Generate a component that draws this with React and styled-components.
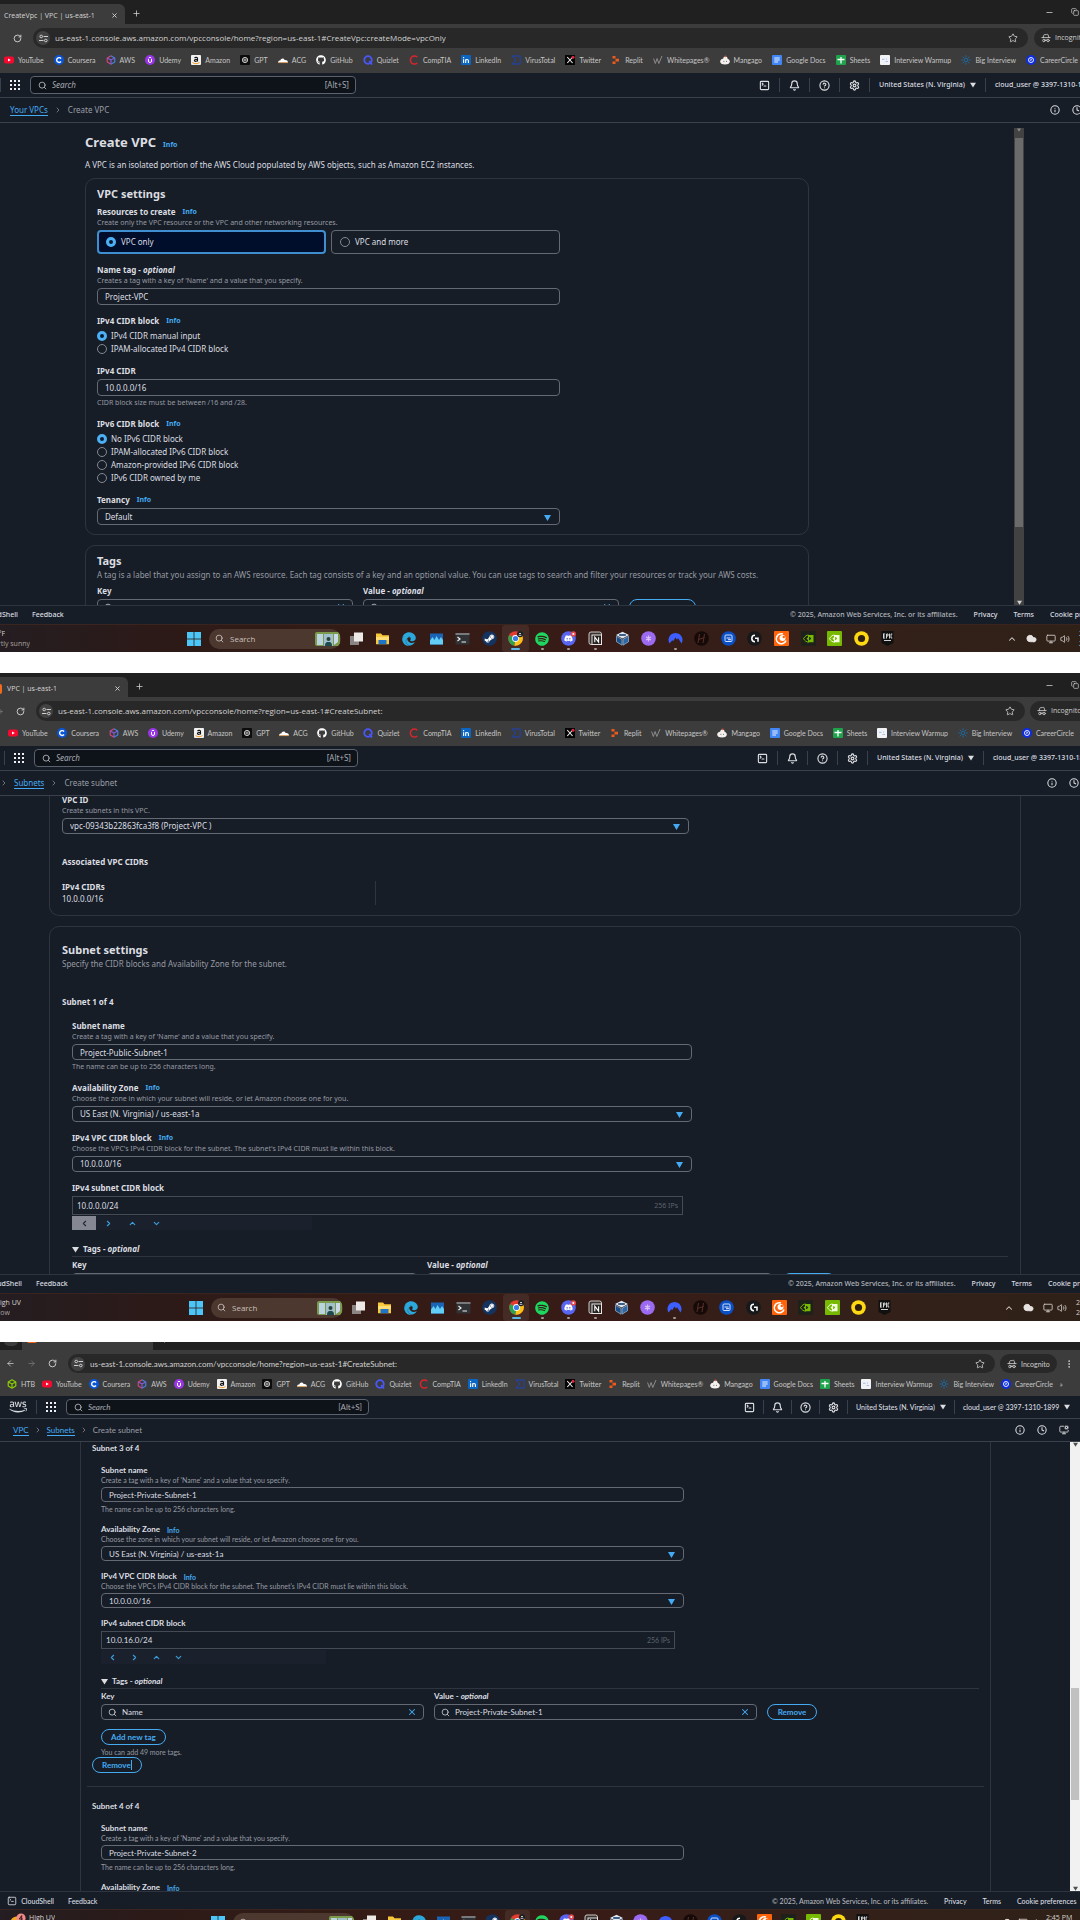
import React, { useId } from 'react';
import styled, { createGlobalStyle, css, ThemeProvider } from 'styled-components';
import {
  FaGithub, FaSpotify, FaDiscord, FaSteamSymbol, FaEdge, FaAws,
} from 'react-icons/fa';
import {
  Search, Bell, CircleQuestionMark, Settings, SquareTerminal, Info, Clock,
  MonitorCog, Monitor, Volume2, ChevronUp, ChevronDown, ChevronLeft, ChevronRight, X, Plus, Star,
  ArrowLeft, ArrowRight, RotateCw, Cloud, Minus, Copy, EllipsisVertical, HatGlasses,
} from 'lucide-react';

const color = {
  bg: '#161d27',
  text: '#dcdde1',
  muted: '#969aa2',
  link: '#45aaf2',
  border: '#646973',
  line: '#2e3540',
  chrome: '#3c3c3c',
  strip: '#202020',
  pill: '#282828',
};

const roomy = {
  font: '"Noto Sans", "Open Sans", sans-serif',
  chromeFont: '"Open Sans", "Noto Sans", sans-serif',
  pill: 20, marks: 25, bar: 25, foot: 19, task: 28,
  label: 12, hint: 10, arrow: 24, stepper: 240,
  crumbGap: 6, toolPad: 9, trayGap: 9, innerLeft: 10, innerTop: 12, tagsTop: 13,
  taskSearch: 132,
};
const first = {
  ...roomy, strip: 24, lead: 33, pillEnd: 6, incognito: 46, marksLeft: 4, marksRight: 2,
  tools: 330, cell: 30, searchEnd: 326, navLead: 20, ctrl: 17,
  iconsWidth: 558, weather: 187, tray: 73, footRight: 290, footLead: 18,
};
const second = {
  ...roomy, strip: 24, lead: 36, pillEnd: 5, incognito: 50, marksLeft: 8, marksRight: 6,
  tools: 332, cell: 30, searchEnd: 324, navLead: 24, ctrl: 16,
  iconsWidth: 553, weather: 189, tray: 76, footRight: 292, footLead: 22,
};
const third = {
  font: 'Lato, "Noto Sans", sans-serif',
  chromeFont: 'Lato, "Open Sans", sans-serif',
  pill: 19, marks: 23, bar: 23, foot: 18, task: 26,
  label: 11, hint: 9, arrow: 22, stepper: 225,
  crumbGap: 5, toolPad: 8, trayGap: 4, innerLeft: 9, innerTop: 11, tagsTop: 11,
  taskSearch: 122,
  strip: 8, lead: 68, pillEnd: 5, incognito: 80, marksLeft: 7, marksRight: 17,
  tools: 344, cell: 28, searchEnd: 303, navLead: 56, ctrl: 15,
  iconsWidth: 518, weather: 211, tray: 91, footRight: 308, footLead: 54,
};

const Global = createGlobalStyle`
  *, *::before, *::after { box-sizing: border-box; }
  html, body { margin: 0; background: #fff; }
  button, input, select { font: inherit; color: inherit; margin: 0; padding: 0; border: 0; background: none; min-width: 0; }
  button { cursor: pointer; }
  h1, h2, h3, p { margin: 0; }
  svg { display: block; flex: none; }
`;

const Page = styled.main`
  height: 100vh;
  overflow: hidden;
  display: flex;
  flex-direction: column;
  gap: 21px;
`;
const Shot = styled.section`
  flex: none;
  overflow: hidden;
  background: ${color.bg};
  color: ${color.text};
  font-family: ${(p) => p.theme.font};
  font-size: 8px;
  line-height: 12px;
`;

/* ---------- browser chrome ---------- */
const TabStrip = styled.div`
  height: ${(p) => p.theme.strip}px;
  overflow: hidden;
  display: flex;
  align-items: flex-end;
  background: ${color.strip};
  color: #d6d6d6;
  font-family: ${(p) => p.theme.chromeFont};
  font-size: 7px;
`;
const Tab = styled.div`
  width: ${(p) => p.$width}px;
  height: 20px;
  padding: ${(p) => p.$pad};
  display: flex;
  align-items: center;
  gap: 5px;
  background: ${color.chrome};
  border-radius: 0 6px 0 0;
  white-space: nowrap;
`;
const TabTitle = styled.span`flex: 1;`;
const TabIcon = styled.span`
  flex: none;
  width: ${(p) => p.$width}px;
  overflow: hidden;
  display: flex;
  justify-content: flex-end;
`;
const TabSearch = styled.span`
  width: 14px; height: 16px; margin: 0 4px 4px; border-radius: 5px; background: ${color.chrome};
`;
const IconButton = styled.button`
  flex: none;
  display: grid;
  place-items: center;
`;
const NewTab = styled(IconButton)`width: 22px; height: 22px;`;
const WindowButtons = styled.div`
  flex: none;
  width: 35px;
  height: 24px;
  margin-left: auto;
  display: flex;
  align-items: center;
  gap: 17px;
`;
const Toolbar = styled.div`
  display: flex;
  padding-top: 4px;
  background: ${color.chrome};
  color: #cfcfcf;
  font-family: ${(p) => p.theme.chromeFont};
`;
const Lead = styled.div`
  flex: none;
  width: ${(p) => p.theme.lead}px;
  padding-right: 11px;
  overflow: hidden;
  display: flex;
  align-items: center;
  justify-content: flex-end;
  gap: 12px;
`;
const Address = styled.div`
  flex: 1;
  height: ${(p) => p.theme.pill}px;
  border-radius: 10px;
  background: ${color.pill};
  display: flex;
  align-items: center;
  gap: 5px;
  padding: 0 10px 0 3px;
`;
const SiteInfo = styled.span`
  width: 14px; height: 14px; border-radius: 7px; background: #424242;
  display: grid; place-items: center;
`;
const AddressInput = styled.input`flex: 1; color: #d2d2d2; outline: none;`;
const Incognito = styled.div`
  flex: none;
  width: ${(p) => p.theme.incognito}px;
  margin-left: ${(p) => p.theme.pillEnd}px;
  display: flex;
  align-items: center;
  gap: 7px;
  overflow: hidden;
  font-size: 7px;
`;
const IncognitoPill = styled.span`
  flex: none;
  height: ${(p) => p.theme.pill}px;
  padding: 0 7px;
  border-radius: 10px;
  background: ${color.pill};
  display: flex;
  align-items: center;
  gap: 4px;
`;
const Bookmarks = styled.nav`
  height: ${(p) => p.theme.marks}px;
  padding: 0 ${(p) => p.theme.marksRight}px 1px ${(p) => p.theme.marksLeft}px;
  display: flex;
  align-items: center;
  justify-content: space-between;
  background: ${color.chrome};
  font: 7px/10px Lato, "Open Sans", sans-serif;
  white-space: nowrap;
`;
const Bookmark = styled.a`
  display: flex;
  align-items: center;
  gap: 4px;
  color: #c6c6c6;
  text-decoration: none;
`;

/* ---------- console header ---------- */
const Bar = styled.div`
  height: ${(p) => p.theme.bar}px;
  display: flex;
  align-items: center;
  border-bottom: 1px solid #3a414c;
  white-space: nowrap;
`;
const NavLead = styled.div`
  flex: none;
  width: ${(p) => p.theme.navLead}px;
  margin-right: 10px;
  overflow: hidden;
  display: flex;
  align-items: center;
  justify-content: flex-end;
  gap: 9px;
`;
const Rule = styled.span`
  width: 1px;
  height: 14px;
  background: #3a414c;
`;
const GlobalSearch = styled.label`
  flex: none;
  width: ${(p) => p.theme.searchEnd}px;
  height: ${(p) => p.theme.bar - 7}px;
  padding: 0 6px 0 7px;
  display: flex;
  align-items: center;
  gap: 5px;
  border: 1px solid #5c626d;
  border-radius: 4px;
  background: #0e131a;
  color: #a9abb2;
`;
const BareInput = styled.input`
  flex: 1;
  outline: none;
  &::placeholder { color: #a9abb2; font-style: italic; opacity: 1; }
`;
const Tools = styled.div`
  flex: none;
  width: ${(p) => p.theme.tools}px;
  margin-left: auto;
  overflow: hidden;
  display: flex;
  align-items: center;
  font-size: 7px;
  font-weight: 500;
`;
const ToolCell = styled.button`
  flex: none;
  height: 14px;
  min-width: ${(p) => p.theme.cell}px;
  padding: 0 ${(p) => (p.$text ? p.theme.toolPad : 0)}px;
  display: flex;
  align-items: center;
  justify-content: center;
  gap: 5px;
  border-right: ${(p) => (p.$last ? '0' : '1px solid #3a414c')};
`;
const Crumbs = styled.nav`
  flex: 1;
  display: flex;
  align-items: center;
  gap: ${(p) => p.theme.crumbGap}px;
  overflow: hidden;
  color: #9a9da5;
  line-height: 10px;
  padding-left: ${(p) => p.$left}px;
`;
const Crumb = styled.a`
  color: ${color.link};
  text-decoration: none;
  border-bottom: 1px solid ${color.link};
`;
const CrumbTools = styled.div`
  flex: none;
  width: ${(p) => p.$width}px;
  display: flex;
  gap: 12px;
`;

/* ---------- console body ---------- */
const Viewport = styled.div`
  height: ${(p) => p.$height}px;
  overflow: hidden;
  display: flex;
`;
const Content = styled.div`
  flex: 1;
  min-width: 0;
  padding: ${(p) => p.$pad};
`;
const Scrolled = styled.div`margin-top: ${(p) => p.$by}px;`;
const Heading = styled.h1`
  height: 18px;
  font-size: 13px;
  line-height: 18px;
  display: flex;
  align-items: baseline;
  gap: 7px;
`;
const Lede = styled.p`margin: 8px 0 7px;`;
const Card = styled.section`
  max-width: ${(p) => p.$max || 'none'};
  padding: ${(p) => p.$pad};
  border: 1px solid ${color.line};
  border-radius: 10px;
  ${(p) => p.$cut && css`border-top: 0; border-radius: 0 0 10px 10px;`}
  ${(p) => p.$open && css`border-top: 0; border-radius: 0;`}
  & + & { margin-top: 10px; }
`;
const CardTitle = styled.h2`font-size: 11px; line-height: 16px;`;
const Sub = styled.p`color: ${color.muted};`;
const Stack = styled.div`
  display: flex;
  flex-direction: column;
  gap: 10px;
  max-width: ${(p) => p.$max};
  margin-top: ${(p) => p.$top || 0}px;
`;
const Group = styled.div`min-width: 0;`;
const LabelRow = styled.div`
  height: ${(p) => p.theme.label}px;
  line-height: ${(p) => p.theme.label}px;
  display: flex;
  align-items: center;
  gap: 7px;
  font-weight: 700;
  white-space: nowrap;
`;
const InfoLink = styled.a`
  color: ${color.link};
  font-size: 7px;
  line-height: 10px;
  font-weight: 700;
  text-decoration: none;
`;
const Hint = styled.p`
  height: ${(p) => p.theme.hint}px;
  line-height: ${(p) => p.theme.hint}px;
  font-size: 7px;
  color: ${color.muted};
  white-space: nowrap;
`;
const Help = styled(Hint)`height: 10px; line-height: 10px; margin-top: 2px;`;
const box = css`
  width: 100%;
  height: ${(p) => p.theme.ctrl}px;
  margin-top: 2px;
  border: 1px solid ${color.border};
  border-radius: 4px;
`;
const TextBox = styled.input`${box} display: block; padding: 0 7px;`;
const SelectWrap = styled.div`position: relative;`;
const SelectBox = styled.select`${box} display: block; padding: 0 7px; appearance: none; background: ${color.bg};`;
const Caret = styled.svg`
  position: absolute;
  right: 9px;
  top: 50%;
  margin-top: -2px;
  pointer-events: none;
`;
const Tiles = styled.div`
  margin-top: 2px;
  display: grid;
  grid-template-columns: 1fr 1fr;
  gap: 5px;
`;
const Tile = styled.label`
  height: 24px;
  padding: 0 8px;
  display: flex;
  align-items: center;
  gap: 5px;
  border: ${(p) => (p.$on ? '2px solid #3f8fd0' : `1px solid ${color.border}`)};
  padding-left: ${(p) => (p.$on ? 7 : 8)}px;
  border-radius: 4px;
  background: ${(p) => (p.$on ? '#000d2b' : 'transparent')};
`;
const Radios = styled.div`margin-top: 2px;`;
const RadioRow = styled.label`
  height: 13px;
  display: flex;
  align-items: center;
  gap: 4px;
`;
const Radio = styled.input`
  appearance: none;
  flex: none;
  width: 10px;
  height: 10px;
  border: 1px solid #858992;
  border-radius: 50%;
  &:checked { border: 3px solid #4cb0f5; background: #0b1a33; }
`;
const Facts = styled.div`
  display: grid;
  grid-template-columns: 314px 1fr;
  margin: 13px 0 10px;
`;
const Fact = styled.div`
  border-right: 1px solid ${color.line};
  line-height: 12px;
`;
const Strong = styled.h3`
  font-size: 8px;
  line-height: ${(p) => p.theme.label}px;
  margin-top: ${(p) => p.$top || 0}px;
`;
const Inner = styled.div`
  padding: ${(p) => p.theme.innerTop}px 0 0 ${(p) => p.theme.innerLeft}px;
`;
const CidrBox = styled.label`
  height: ${(p) => p.theme.ctrl + 3}px;
  margin: 2px 9px 0 0;
  padding: 0 4px;
  display: flex;
  align-items: center;
  border: 1px solid #454b55;
`;
const Count = styled.span`font-size: 7px; color: #5d626b;`;
const Stepper = styled.div`
  width: ${(p) => p.theme.stepper}px;
  height: 14px;
  margin-top: 1px;
  display: flex;
  background: #1a212c;
  color: #3aa0dc;
`;
const Step = styled(IconButton)`
  width: ${(p) => p.theme.arrow}px;
  height: 14px;
  &:disabled { background: #858892; color: #23282f; }
`;
const TagsHead = styled.h3`
  margin: ${(p) => p.theme.tagsTop}px 0 2px;
  padding-bottom: 1px;
  display: flex;
  align-items: center;
  gap: 4px;
  border-bottom: 1px solid ${color.line};
  font-size: 8px;
  line-height: 12px;
`;
const TagRow = styled.div`
  display: grid;
  grid-template-columns: ${(p) => p.$cols};
  gap: ${(p) => p.$gap || 10}px;
  align-items: end;
`;
const TagBox = styled.div`
  ${box}
  height: 16px;
  padding: 0 6px;
  display: flex;
  align-items: center;
  gap: 5px;
  color: ${color.text};
`;
const Pill = styled.button`
  height: 16px;
  padding: 0 9px;
  display: inline-flex;
  align-items: center;
  justify-content: center;
  border: 1px solid ${color.link};
  border-radius: 8px;
  color: ${color.link};
  font-weight: 700;
  line-height: 12px;
`;
const TextCursor = styled.span`width: 1px; height: 10px; background: ${color.link};`;
const Divider = styled.hr`
  height: 1px;
  border: 0;
  margin: 13px -5px 14px;
  background: ${color.line};
`;
const Scrollbar = styled.div`
  flex: none;
  width: 10px;
  margin: ${(p) => p.$top || 0}px ${(p) => p.$right || 0}px 0 0;
  display: flex;
  flex-direction: column;
  align-items: center;
  justify-content: space-between;
  background: ${(p) => p.$track};
`;
const Thumb = styled.div`
  width: 8px;
  height: ${(p) => p.$height}px;
  margin-bottom: auto;
  margin-top: ${(p) => p.$offset || 0}px;
  background: ${(p) => p.$color};
`;

/* ---------- footer and taskbar ---------- */
const Footer = styled.footer`
  height: ${(p) => p.theme.foot}px;
  border-top: 1px solid ${color.line};
  display: flex;
  align-items: center;
  gap: 14px;
  font-size: 7px;
  font-weight: 500;
  white-space: nowrap;
`;
const FootLead = styled.div`
  flex: none;
  width: ${(p) => p.theme.footLead}px;
  overflow: hidden;
  display: flex;
  align-items: center;
  justify-content: flex-end;
  gap: 4px;
`;
const FootLink = styled.a`color: ${color.text}; text-decoration: none; flex: none;`;
const FootRight = styled.div`
  flex: none;
  width: ${(p) => p.theme.footRight}px;
  margin-left: auto;
  overflow: hidden;
  display: flex;
  gap: 16px;
`;
const Legal = styled.span`flex: none; color: #b4b6bc;`;
const Taskbar = styled.div`
  height: ${(p) => p.theme.task}px;
  display: flex;
  align-items: center;
  background: linear-gradient(90deg, #241d21 0%, #2c1a18 14%, #331b15 30%, #381b16 55%, #34201a 75%, #2f2117 100%);
  border-top: 1px solid #3a2420;
  font: 7px/10px "Open Sans", sans-serif;
  color: #d8d2d0;
`;
const Weather = styled.div`
  flex: none;
  width: ${(p) => p.theme.weather}px;
  display: flex;
  gap: 3px;
  padding-left: ${(p) => p.$left || 0}px;
`;
const WeatherText = styled.div`
  overflow: hidden;
  white-space: nowrap;
`;
const WeatherLine = styled.div`
  width: ${(p) => (p.$width ? `${p.$width}px` : 'auto')};
  overflow: hidden;
  display: flex;
  justify-content: ${(p) => (p.$width ? 'flex-end' : 'flex-start')};
  color: ${(p) => (p.$dim ? '#a8a09e' : 'inherit')};
`;
const TaskSearch = styled.label`
  flex: none;
  width: ${(p) => p.theme.taskSearch}px;
  height: 20px;
  margin: 0 2px 0 8px;
  padding: 0 1px 0 6px;
  display: flex;
  align-items: center;
  gap: 6px;
  border-radius: 10px;
  background: #4d382f;
  font-size: 8px;
  overflow: hidden;
`;
const TaskInput = styled.input`
  flex: 1; outline: none;
  &::placeholder { color: #c9c0bc; opacity: 1; }
`;
const Apps = styled.div`
  flex: none;
  width: ${(p) => p.theme.iconsWidth}px;
  height: 100%;
  display: flex;
`;
const AppButton = styled.button`
  flex: 1;
  display: flex;
  flex-direction: column;
  align-items: center;
  justify-content: flex-end;
  gap: 2px;
  border-radius: 3px;
  background: ${(p) => (p.$state === 'active' ? 'rgba(255,255,255,0.07)' : 'none')};
  &::after {
    content: '';
    width: ${(p) => (p.$state === 'active' ? 9 : 3)}px;
    height: 2px;
    margin-bottom: 2px;
    border-radius: 1px;
    background: ${(p) => ({ active: '#5db4e6', open: '#a39a97' }[p.$state] || 'transparent')};
  }
`;
const Tray = styled.div`
  flex: none;
  width: ${(p) => p.theme.tray}px;
  margin-left: auto;
  overflow: hidden;
  display: flex;
  align-items: center;
  gap: ${(p) => p.theme.trayGap}px;
  white-space: nowrap;
`;
const TrayPair = styled.div`display: flex; gap: 4px; align-items: center;`;

/* ---------- drawings ---------- */
const Down = ({ size = 6, fill = 'currentColor' }) => (
  <svg width={size} height={size} viewBox="0 0 6 6"><path d="M0 .8h6L3 5.6z" fill={fill} /></svg>
);
const Grid9 = () => (
  <svg width="10" height="10" viewBox="0 0 10 10" fill="#f0f0f2">
    {[0, 4, 8].map((y) => [0, 4, 8].map((x) => <rect key={`${x}-${y}`} x={x} y={y} width="2" height="2" />))}
  </svg>
);
const Sliders = () => (
  <svg width="9" height="9" viewBox="0 0 9 9" fill="none" stroke="#cfcfcf">
    <path d="M4.5 2.5H9M0 6.5h4.5" /><circle cx="2.2" cy="2.5" r="1.3" /><circle cx="6.8" cy="6.5" r="1.3" />
  </svg>
);
const Sq = ({ bg, children, r = 1 }) => (
  <svg width="10" height="10" viewBox="0 0 10 10"><rect width="10" height="10" rx={r} fill={bg} />{children}</svg>
);
const Raw = ({ children }) => <svg width="10" height="10" viewBox="0 0 10 10" fill="none">{children}</svg>;
const Cube = ({ a, b, c }) => (
  <Raw>
    <path d="M5 .8 8.8 3v4L5 9.2" stroke={a} strokeWidth="1.1" />
    <path d="M5 9.2 1.2 7V3L5 .8" stroke={b} strokeWidth="1.1" />
    <path d="M1.2 3 5 5l3.8-2M5 5v4" stroke={c} strokeWidth="1.1" />
  </Raw>
);
const bookmarks = [
  ['YouTube', <Raw><rect y="1.5" width="10" height="7" rx="2" fill="#f5092f" /><path d="M4 3.4 6.8 5 4 6.6z" fill="#fff" /></Raw>],
  ['Coursera', <Sq bg="#0a55d6" r={5}><path d="M7 3.6A2.4 2.4 0 1 0 7 6.5" stroke="#fff" strokeWidth="1.4" fill="none" /></Sq>],
  ['AWS', <Cube a="#3f86e8" b="#d8467a" c="#8a5be0" />],
  ['Udemy', <Sq bg="#9a35e6" r={5}><path d="M3.5 4v2a1.5 1.5 0 0 0 3 0V4M3.7 3 5 2.2 6.3 3" stroke="#fff" strokeWidth="1" fill="none" /></Sq>],
  ['Amazon', <Sq bg="#f1f1f1"><path d="M3.5 3c1-1 3-.8 3 .6v3M6.4 4.2c-1.600 0-3 .2-3 1.300s2.200 1.200 3 0" stroke="#111" strokeWidth="1.1" fill="none" /><path d="M1.500 7.600c2.300 1.500 4.700 1.500 7 0" stroke="#f59a1c" strokeWidth="1" fill="none" /></Sq>],
  ['GPT', <Sq bg="#0c0c0c"><circle cx="5" cy="5" r="2.600" stroke="#c9c9c9" fill="none" /><path d="M5 2.400v5.200M2.700 3.700l4.600 2.600M7.300 3.700 2.700 6.300" stroke="#c9c9c9" strokeWidth=".6" /></Sq>],
  ['ACG', <Raw><path d="M0 7.500c0-1.700 1.700-2 2.300-2C2.700 3 6 2.600 6.700 5c1.600-.2 3.300.6 3.300 2.500z" fill="#fff" /><path d="M0 7.600h10" stroke="#f0a050" strokeWidth=".7" /></Raw>],
  ['GitHub', <FaGithub size={10} color="#fff" />],
  ['Quizlet', <Raw><circle cx="5" cy="5" r="3.800" stroke="#4a57f5" strokeWidth="1.800" /><path d="m6.200 6.200 2.800 3.300" stroke="#4a57f5" strokeWidth="1.800" /></Raw>],
  ['CompTIA', <Raw><path d="M8.200 2.300A4 4 0 1 0 8.200 7.900" stroke="#d8262e" strokeWidth="1.500" /></Raw>],
  ['LinkedIn', <Sq bg="#0a66c2"><path d="M2.600 4.200V8M4.700 8V4.200M4.700 5.800c0-1.800 2.700-1.800 2.700 0V8M2.600 2v1.200" stroke="#fff" strokeWidth="1.100" fill="none" /></Sq>],
  ['VirusTotal', <Raw><path d="M.8 1h8.400v8H.8L5 5z" stroke="#1c43b8" strokeWidth="1" /></Raw>],
  ['Twitter', <Sq bg="#050505" r={0}><path d="m2.200 2 5.400 6M7.700 2 2.300 8" stroke="#eee" strokeWidth="1.100" /><circle cx="8" cy="2.200" r="1.500" fill="#e0273d" /></Sq>],
  ['Replit', <Raw><path d="M1.500 1h3v2.600h-3zM4.500 3.700H8v2.700H4.500zM1.500 6.400h3V9h-3z" fill="#ee5a1a" /></Raw>],
  ['Whitepages®', <Raw><path d="m.6 3.500 1.700 5 1.800-5 1.700 5L9 1" stroke="#8b8b8b" strokeWidth="1" /></Raw>],
  ['Mangago', <Raw><ellipse cx="5" cy="6.500" rx="4.800" ry="3" fill="#f4f0ee" /><circle cx="5.400" cy="3.800" r="2.200" fill="#f4f0ee" /><circle cx="5.500" cy="1.300" r=".9" fill="#d8563c" /><path d="M3.500 6.400h.8M6.200 6.400H7" stroke="#333" strokeWidth=".8" /></Raw>],
  ['Google Docs', <Sq bg="#4285f4"><path d="M2.300 3h5.400M2.300 5h5.400M2.300 7h3.700" stroke="#fff" strokeWidth=".9" /></Sq>],
  ['Sheets', <Sq bg="#1fa24c"><path d="M5 2v6.500M1.500 4.500h7" stroke="#fff" strokeWidth="1.300" /></Sq>],
  ['Interview Warmup', <Sq bg="#f0f2f6"><path d="M2 4.300h2.500M5.500 6.500H8M6 4h1" stroke="#9db7ea" strokeWidth=".9" /></Sq>],
  ['Big Interview', <Raw><g stroke="#1672b8" strokeWidth=".8"><circle cx="5" cy="5" r="1.800" /><path d="M5 .3v2M5 7.700v2M.3 5h2M7.700 5h2M1.700 1.700l1.400 1.400M6.900 6.900l1.400 1.400M8.300 1.700 6.900 3.100M3.100 6.900 1.700 8.300" /></g></Raw>],
  ['CareerCircle', <Sq bg="#0d2ee0" r={5}><circle cx="5" cy="5" r="2.500" stroke="#fff" fill="none" strokeWidth=".9" /><path d="M4.300 4.200h1.200L4.600 6" stroke="#fff" strokeWidth=".8" fill="none" /></Sq>],
];

const Disc = ({ bg, children }) => (
  <svg width="15" height="15" viewBox="0 0 15 15"><circle cx="7.500" cy="7.500" r="7.300" fill={bg} />{children}</svg>
);
const Block = ({ bg = 'none', children, r = 1 }) => (
  <svg width="15" height="15" viewBox="0 0 15 15"><rect width="15" height="15" rx={r} fill={bg} />{children}</svg>
);
const Badge = () => <><circle cx="12.300" cy="3" r="2.700" fill="#e5484d" /><circle cx="12.300" cy="3" r="1" fill="#fff" /></>;
const Eye = ({ c }) => (
  <>
    <path d="M2.500 7.600C4 5 6 4 7.500 4v7.200C5.500 11 3.600 9.700 2.500 7.600z" fill="none" stroke={c} strokeWidth="1" />
    <path d="M7 4h5.500v7.200H7V9.500c1.500 0 2.500-.8 3.200-1.900C9.500 6.500 8.500 5.800 7 5.800z" fill={c} />
    <circle cx="7" cy="7.600" r="1.200" fill={c} />
  </>
);
const apps = [
  ['Task view', '', <Block><rect x="1" y="5" width="9" height="9" fill="#8a8583" /><rect x="5" y="1.500" width="9" height="9" fill="#ece9e7" /></Block>],
  ['File Explorer', '', <Block><path d="M1 2.500h5l1.500 1.700H14v9H1z" fill="#f8c93b" /><path d="M3.500 9h8v4.200h-8z" fill="#1f74c9" /><path d="M1 6h13v3H1z" fill="#ffdf75" /></Block>],
  ['Edge', '', <FaEdge size={14} color="#2ba9dc" />],
  ['Task Manager', '', <Block><rect x="1" y="2.500" width="13" height="11" fill="#1b63b5" /><path d="M1 9.500 3.500 6l2 3 2-4 2.500 4L12 6l2 3v4.500H1z" fill="#62cdf5" /></Block>],
  ['Terminal', '', <Block><rect x=".5" y="2" width="14" height="11.500" rx="1" fill="#303236" /><rect x=".5" y="2" width="14" height="2" fill="#77797d" /><path d="m2.500 6 2.500 2-2.500 2M6.500 11h4.500" stroke="#eee" strokeWidth="1.200" fill="none" /></Block>],
  ['Steam', '', <Disc bg="#14335f"><g transform="translate(2 2)"><FaSteamSymbol size={11} color="#fff" /></g></Disc>],
  ['Chrome', 'active', <Disc bg="#e33b2e"><path d="M7.500 7.500 1.200 4a7.300 7.300 0 0 0 5.300 10.700z" fill="#2fa24f" /><path d="M7.500 7.500 6.500 14.700A7.300 7.300 0 0 0 14.200 4.500H7.500z" fill="#fbc116" /><circle cx="7.500" cy="7.500" r="3.400" fill="#fff" /><circle cx="7.500" cy="7.500" r="2.600" fill="#3b7de8" /><circle cx="12" cy="3.200" r="3" fill="#1a1f24" /><path d="M11 2.500h2M10.600 4.300h2.800" stroke="#d8dde2" strokeWidth=".9" /></Disc>],
  ['Spotify', 'open', <FaSpotify size={14} color="#1ed760" />],
  ['Discord', 'open', <Disc bg="#5865f2"><g transform="translate(3 3)"><FaDiscord size={9} color="#fff" /></g><Badge /></Disc>],
  ['Notion', 'open', <Block><rect x="1" y="1" width="12.500" height="12.500" rx="2" fill="#3a3431" stroke="#cfcac7" /><rect x="4" y="4" width="9.500" height="9.500" fill="#262220" stroke="#e8e4e1" /><path d="M6.800 11.200v-5l3.800 5v-5" stroke="#fff" strokeWidth="1.100" fill="none" /></Block>],
  ['VirtualBox', '', <Block><path d="M7.500 .8 14 4 7.500 7.600 1 4z" fill="#dde8f2" /><path d="M1.500 5.200 7 8.300v5.900l-5.500-3.400z" fill="#1d4e86" stroke="#9dbbd8" strokeWidth=".7" /><path d="M13.500 5.200 8 8.300v5.900l5.500-3.400z" fill="#2c67a6" stroke="#9dbbd8" strokeWidth=".7" /><path d="M4.200 4h6.600" stroke="#173a66" strokeWidth="1.600" /></Block>],
  ['Obs', '', <Disc bg="#9b6af0"><path d="M7.500 4.500v6M5 6l5 3M10 6 5 9" stroke="#d9c2ff" strokeWidth="1.200" /></Disc>],
  ['NordVPN', 'open', <Block><path d="M1.500 12.500A7 7 0 1 1 13.500 12.500L10 7 9 8.700 7.500 6.500 5 10.500 4.500 9z" fill="#3e5fff" /></Block>],
  ['Hitman', '', <Disc bg="#150a08"><path d="M5.500 3 4 12M10.500 3 9 12M4.500 8.500l6-2" stroke="#5a2f28" strokeWidth="1" /></Disc>],
  ['Remote', '', <Disc bg="#0b4fc4"><rect x="4" y="4" width="7" height="6.500" rx="1" stroke="#cfe2ff" fill="none" /><path d="M5.500 7h4M7 8.700h3" stroke="#fff" strokeWidth=".9" /></Disc>],
  ['G HUB', '', <Disc bg="#16181a"><path d="M8 4.300a3.200 3.200 0 1 0 0 6.400M8 7.200h3v3.500" stroke="#fff" strokeWidth="1.500" fill="none" /></Disc>],
  ['Crunchyroll', '', <Block bg="#ff640a"><path d="M12 9.500A5 5 0 1 1 9 3" stroke="#fff" strokeWidth="1.600" fill="none" /><circle cx="8.500" cy="7" r="3" fill="#fff" /><circle cx="9.800" cy="6" r="1.200" fill="#ff640a" /></Block>],
  ['NVIDIA app', '', <Block bg="#1d2119"><Eye c="#76b900" /></Block>],
  ['GeForce', '', <Block bg="#76b900"><Eye c="#f3ffe0" /></Block>],
  ['Rockstar', '', <Disc bg="#ffd814"><circle cx="7.500" cy="7.500" r="3.600" fill="#2c1d10" /></Disc>],
  ['Epic Games', '', <Block><path d="M1.500 0h12v12L7.500 15 1.500 12z" fill="#101010" /><path d="M3.500 2.500v5M3.500 3h1.700M3.500 5h1.500M3.500 7h1.700M6.500 7.500V3h1.500v2H6.500M9.500 2.500v5M12.300 3H11v4h1.300M4 9.500h7" stroke="#e6e6e6" strokeWidth=".9" fill="none" /></Block>],
];
const WinLogo = () => (
  <svg width="14" height="14" viewBox="0 0 14 14" fill="#4cc6f7">
    <rect width="6.600" height="6.600" /><rect x="7.400" width="6.600" height="6.600" /><rect y="7.400" width="6.600" height="6.600" /><rect x="7.400" y="7.400" width="6.600" height="6.600" />
  </svg>
);
const Gallery = () => (
  <svg width="25" height="14" viewBox="0 0 25 14">
    <rect width="25" height="14" rx="2" fill="#7c9a4b" /><rect x="2" y="2" width="6" height="11" fill="#b9d3e0" /><rect x="9" y="2" width="9" height="12" fill="#9fc0cc" />
    <path d="M10 14c0-4 2-4 3.500-4s3.500 0 3.500 4z" fill="#1f4a4a" /><circle cx="13.500" cy="7" r="2" fill="#2a4038" /><path d="M19 2h4v8l-4 3z" fill="#c9d9e8" />
  </svg>
);
const SunBadge = () => (
  <svg width="16" height="16" viewBox="0 0 16 16"><circle cx="6.500" cy="9.500" r="6" fill="#f5a623" /><circle cx="11" cy="5" r="4.600" fill="#f28b8b" /><path d="M11.700 7.500v-5L9.300 6h3.400" stroke="#3a1a1a" fill="none" /></svg>
);

/* ---------- shared parts ---------- */
function Chrome({ tab, tabWidth, tabPad, tabIcon, url, full }) {
  return (
    <>
      <TabStrip>
        {full && <TabSearch />}
        <Tab $width={tabWidth} $pad={tabPad}>
          {tabIcon && <TabIcon $width={tabIcon}><Sq bg="#f26b1d" r={2} /></TabIcon>}
          <TabTitle>{tab}</TabTitle>
          <IconButton aria-label="Close tab"><X size={7} strokeWidth={3} /></IconButton>
        </Tab>
        <NewTab aria-label="New tab"><Plus size={9} /></NewTab>
        <WindowButtons>
          <IconButton aria-label="Minimize"><Minus size={9} /></IconButton>
          <IconButton aria-label="Restore"><Copy size={8} /></IconButton>
        </WindowButtons>
      </TabStrip>
      <Toolbar>
        <Lead>
          <IconButton aria-label="Back"><ArrowLeft size={9} /></IconButton>
          <IconButton aria-label="Forward"><ArrowRight size={9} color="#7a7a7a" /></IconButton>
          <IconButton aria-label="Reload"><RotateCw size={9} strokeWidth={2.500} /></IconButton>
        </Lead>
        <Address>
          <SiteInfo><Sliders /></SiteInfo>
          <AddressInput aria-label="Address" defaultValue={url} />
          <Star size={10} />
        </Address>
        <Incognito>
          <IncognitoPill><HatGlasses size={10} /> Incognito</IncognitoPill>
          {full && <EllipsisVertical size={10} />}
        </Incognito>
      </Toolbar>
      <Bookmarks aria-label="Bookmarks">
        {full && <Bookmark href="#htb"><Cube a="#8fd400" b="#8fd400" c="#8fd400" />HTB</Bookmark>}
        {bookmarks.map(([name, icon]) => <Bookmark key={name} href={`#${name}`}>{icon}{name}</Bookmark>)}
        {full && <Bookmark href="#more">»</Bookmark>}
      </Bookmarks>
    </>
  );
}

function Header({ full, left, trail, toolsWidth }) {
  return (
    <>
      <Bar>
        <NavLead>
          {full && <FaAws size={18} />}
          <Rule />
          <Grid9 />
        </NavLead>
        <GlobalSearch>
          <Search size={9} strokeWidth={2.500} />
          <BareInput placeholder="Search" aria-label="Search services" />
          [Alt+S]
        </GlobalSearch>
        <Tools>
          <ToolCell aria-label="CloudShell"><SquareTerminal size={11} strokeWidth={2.500} /></ToolCell>
          <ToolCell aria-label="Notifications"><Bell size={11} strokeWidth={2.500} /></ToolCell>
          <ToolCell aria-label="Support"><CircleQuestionMark size={11} strokeWidth={2.500} /></ToolCell>
          <ToolCell aria-label="Settings"><Settings size={11} strokeWidth={2.500} /></ToolCell>
          <ToolCell $text>United States (N. Virginia) <Down /></ToolCell>
          <ToolCell $text $last>cloud_user @ 3397-1310-1899 <Down /></ToolCell>
        </Tools>
      </Bar>
      <Bar>
        <Crumbs aria-label="Breadcrumb" $left={left}>
          {trail.map((t, i) => (
            <React.Fragment key={i}>
              {i > 0 && <ChevronRight size={8} />}
              {i < trail.length - 1 ? t && <Crumb href={`#${t}`}>{t}</Crumb> : <span>{t}</span>}
            </React.Fragment>
          ))}
        </Crumbs>
        <CrumbTools $width={toolsWidth}>
          <Info size={10} strokeWidth={2.500} />
          <Clock size={10} strokeWidth={2.500} />
          {full && <MonitorCog size={10} />}
        </CrumbTools>
      </Bar>
    </>
  );
}

function Label({ htmlFor, info, optional, children }) {
  return (
    <LabelRow>
      <label htmlFor={htmlFor}>{children}{optional && <> - <em>optional</em></>}</label>
      {info && <InfoLink href="#info">Info</InfoLink>}
    </LabelRow>
  );
}
function TextField({ label, optional, hint, help, value }) {
  const id = useId();
  return (
    <Group>
      <Label htmlFor={id} optional={optional}>{label}</Label>
      {hint && <Hint>{hint}</Hint>}
      <TextBox id={id} defaultValue={value} />
      {help && <Help>{help}</Help>}
    </Group>
  );
}
function SelectField({ label, info, hint, value }) {
  const id = useId();
  return (
    <Group>
      <Label htmlFor={id} info={info}>{label}</Label>
      {hint && <Hint>{hint}</Hint>}
      <SelectWrap>
        <SelectBox id={id}><option>{value}</option></SelectBox>
        <Caret width="7" height="6" viewBox="0 0 7 6"><path d="M0 0h7L3.500 6z" fill="#45aaf2" /></Caret>
      </SelectWrap>
    </Group>
  );
}
function RadioField({ label, options }) {
  const name = useId();
  return (
    <Group role="radiogroup" aria-label={label}>
      <LabelRow>{label}<InfoLink href="#info">Info</InfoLink></LabelRow>
      <Radios>
        {options.map((o, i) => (
          <RadioRow key={o}><Radio type="radio" name={name} defaultChecked={i === 0} />{o}</RadioRow>
        ))}
      </Radios>
    </Group>
  );
}
function TagField({ label, optional, value }) {
  const id = useId();
  return (
    <Group>
      <Label htmlFor={id} optional={optional}>{label}</Label>
      <TagBox>
        <Search size={9} />
        <BareInput id={id} defaultValue={value} />
        <IconButton aria-label={`Clear ${label}`}><X size={10} color="#45aaf2" strokeWidth={2.500} /></IconButton>
      </TagBox>
    </Group>
  );
}
function CidrField({ value, locked }) {
  const id = useId();
  return (
    <Group>
      <Label htmlFor={id}>IPv4 subnet CIDR block</Label>
      <CidrBox><BareInput id={id} defaultValue={value} /><Count>256 IPs</Count></CidrBox>
      <Stepper>
        <Step disabled={locked} aria-label="Previous block"><ChevronLeft size={9} strokeWidth={3} /></Step>
        <Step aria-label="Next block"><ChevronRight size={9} strokeWidth={3} /></Step>
        <Step aria-label="Larger block"><ChevronUp size={9} strokeWidth={3} /></Step>
        <Step aria-label="Smaller block"><ChevronDown size={9} strokeWidth={3} /></Step>
      </Stepper>
    </Group>
  );
}
function SubnetFields({ name, cidr, locked, max }) {
  return (
    <Stack $max={max}>
      <TextField label="Subnet name" hint="Create a tag with a key of 'Name' and a value that you specify." value={name} help="The name can be up to 256 characters long." />
      <SelectField label="Availability Zone" info hint={cidr && 'Choose the zone in which your subnet will reside, or let Amazon choose one for you.'} value="US East (N. Virginia) / us-east-1a" />
      {cidr && <SelectField label="IPv4 VPC CIDR block" info hint="Choose the VPC's IPv4 CIDR block for the subnet. The subnet's IPv4 CIDR must lie within this block." value="10.0.0.0/16" />}
      {cidr && <CidrField value={cidr} locked={locked} />}
    </Stack>
  );
}

function Bottom({ full, lines, time }) {
  return (
    <>
      <Footer>
        <FootLead>{full && <SquareTerminal size={10} />}CloudShell</FootLead>
        <FootLink href="#feedback">Feedback</FootLink>
        <FootRight>
          <Legal>© 2025, Amazon Web Services, Inc. or its affiliates.</Legal>
          <FootLink href="#privacy">Privacy</FootLink>
          <FootLink href="#terms">Terms</FootLink>
          <FootLink href="#cookies">Cookie preferences</FootLink>
        </FootRight>
      </Footer>
      <Taskbar>
        <Weather $left={full ? 10 : 0}>
          {full && <SunBadge />}
          <WeatherText>
            {lines.map(([t, w], i) => <WeatherLine key={t} $width={w} $dim={i === 1}>{t}</WeatherLine>)}
          </WeatherText>
        </Weather>
        <IconButton aria-label="Start"><WinLogo /></IconButton>
        <TaskSearch>
          <Search size={9} />
          <TaskInput placeholder="Search" aria-label="Search Windows" />
          <Gallery />
        </TaskSearch>
        <Apps>
          {apps.map(([name, state, icon]) => <AppButton key={name} $state={state} aria-label={name}>{icon}</AppButton>)}
        </Apps>
        <Tray>
          <ChevronUp size={10} strokeWidth={2.500} />
          <Cloud size={11} fill="#e6e2e0" color="#e6e2e0" />
          <TrayPair><Monitor size={10} /><Volume2 size={10} /></TrayPair>
          <div>{time.map((t) => <div key={t}>{t}</div>)}</div>
        </Tray>
      </Taskbar>
    </>
  );
}

function CreateVpc() {
  return (
    <ThemeProvider theme={first}>
      <Shot>
        <Chrome tab="CreateVpc | VPC | us-east-1" tabWidth={125} tabPad="3px 7px 0 4px" url="us-east-1.console.aws.amazon.com/vpcconsole/home?region=us-east-1#CreateVpc:createMode=vpcOnly" />
        <Header left={10} trail={['Your VPCs', 'Create VPC']} toolsWidth={30} />
        <Viewport $height={482}>
          <Content $pad="10px 0 0 85px">
            <Heading>Create VPC <InfoLink href="#info">Info</InfoLink></Heading>
            <Lede>A VPC is an isolated portion of the AWS Cloud populated by AWS objects, such as Amazon EC2 instances.</Lede>
            <Card $max="724px" $pad="7px 11px 9px">
              <CardTitle>VPC settings</CardTitle>
              <Stack $max="463px" $top={4}>
                <Group role="radiogroup" aria-label="Resources to create">
                  <LabelRow>Resources to create<InfoLink href="#info">Info</InfoLink></LabelRow>
                  <Hint>Create only the VPC resource or the VPC and other networking resources.</Hint>
                  <Tiles>
                    <Tile $on><Radio type="radio" name="resources" defaultChecked />VPC only</Tile>
                    <Tile><Radio type="radio" name="resources" />VPC and more</Tile>
                  </Tiles>
                </Group>
                <TextField label="Name tag" optional hint="Creates a tag with a key of 'Name' and a value that you specify." value="Project-VPC" />
                <RadioField label="IPv4 CIDR block" options={['IPv4 CIDR manual input', 'IPAM-allocated IPv4 CIDR block']} />
                <TextField label="IPv4 CIDR" value="10.0.0.0/16" help="CIDR block size must be between /16 and /28." />
                <RadioField label="IPv6 CIDR block" options={['No IPv6 CIDR block', 'IPAM-allocated IPv6 CIDR block', 'Amazon-provided IPv6 CIDR block', 'IPv6 CIDR owned by me']} />
                <SelectField label="Tenancy" info value="Default" />
              </Stack>
            </Card>
            <Card $max="724px" $pad="7px 11px 9px">
              <CardTitle>Tags</CardTitle>
              <Sub>A tag is a label that you assign to an AWS resource. Each tag consists of a key and an optional value. You can use tags to search and filter your resources or track your AWS costs.</Sub>
              <Stack $top={4}>
                <TagRow $cols="256px 256px 67px">
                  <TagField label="Key" />
                  <TagField label="Value" optional />
                  <Pill aria-label="Remove" />
                </TagRow>
              </Stack>
            </Card>
          </Content>
          <Scrollbar $top={5} $right={56} $track="#424242">
            <Down size={4} fill="#8a8a8a" />
            <Thumb $height={389} $offset={6} $color="#6b6b6b" />
            <Down size={5} fill="#d0d0d0" />
          </Scrollbar>
        </Viewport>
        <Bottom lines={[['88°F', 5], ['Partly sunny', 30]]} time={['2:41 PM', '2/20/25']} />
      </Shot>
    </ThemeProvider>
  );
}

function CreateSubnetTop() {
  return (
    <ThemeProvider theme={second}>
      <Shot>
        <Chrome tab="VPC | us-east-1" tabWidth={128} tabPad="3px 7px 0 0" tabIcon={2} url="us-east-1.console.aws.amazon.com/vpcconsole/home?region=us-east-1#CreateSubnet:" />
        <Header left={0} trail={['', 'Subnets', 'Create subnet']} toolsWidth={33} />
        <Viewport $height={478}>
          <Content $pad="0 59px 0 49px">
            <Scrolled $by={-2}>
              <Card $cut $pad="0 12px">
                <Stack $max="627px">
                  <SelectField label="VPC ID" hint="Create subnets in this VPC." value="vpc-09343b22863fca3f8 (Project-VPC )" />
                </Stack>
                <Strong $top={22}>Associated VPC CIDRs</Strong>
                <Facts>
                  <Fact><Strong>IPv4 CIDRs</Strong>10.0.0.0/16</Fact>
                </Facts>
              </Card>
              <Card $pad="15px 12px">
                <CardTitle>Subnet settings</CardTitle>
                <Sub>Specify the CIDR blocks and Availability Zone for the subnet.</Sub>
                <Strong $top={26}>Subnet 1 of 4</Strong>
                <Inner>
                  <SubnetFields name="Project-Public-Subnet-1" cidr="10.0.0.0/24" locked max="620px" />
                  <TagsHead><Down size={7} /><span>Tags - <em>optional</em></span></TagsHead>
                  <TagRow $cols="345px 345px 54px">
                    <TagField label="Key" />
                    <TagField label="Value" optional />
                    <Pill aria-label="Remove" />
                  </TagRow>
                </Inner>
              </Card>
            </Scrolled>
          </Content>
        </Viewport>
        <Bottom lines={[['High UV', 21], ['Now', 10]]} time={['2:44 PM', '2/20/25']} />
      </Shot>
    </ThemeProvider>
  );
}

function CreateSubnetEnd() {
  return (
    <ThemeProvider theme={third}>
      <Shot>
        <Chrome full tab="CreateSubnet | VPC | us-east-1" tabWidth={131} tabPad="0 7px 4px 5px" tabIcon={10} url="us-east-1.console.aws.amazon.com/vpcconsole/home?region=us-east-1#CreateSubnet:" />
        <Header full left={13} trail={['VPC', 'Subnets', 'Create subnet']} toolsWidth={65} />
        <Viewport $height={449}>
          <Content $pad="0 79px 0 80px">
            <Card $open $pad="1px 11px 0">
              <Strong>Subnet 3 of 4</Strong>
              <Inner>
                <SubnetFields name="Project-Private-Subnet-1" cidr="10.0.16.0/24" max="583px" />
                <TagsHead><Down size={7} /><span>Tags - <em>optional</em></span></TagsHead>
                <TagRow $cols="323px 323px 50px" $gap={10}>
                  <TagField label="Key" value="Name" />
                  <TagField label="Value" optional value="Project-Private-Subnet-1" />
                  <Pill>Remove</Pill>
                </TagRow>
                <Stack $top={9}>
                  <Group>
                    <Pill>Add new tag</Pill>
                    <Help>You can add 49 more tags.</Help>
                  </Group>
                </Stack>
              </Inner>
              <Pill>Remove<TextCursor /></Pill>
              <Divider />
              <Strong>Subnet 4 of 4</Strong>
              <Inner>
                <SubnetFields name="Project-Private-Subnet-2" max="583px" />
              </Inner>
            </Card>
          </Content>
          <Scrollbar $track="#f1f1f1">
            <Down size={5} fill="#505050" />
            <Thumb $height={112} $offset={241} $color="#c1c1c1" />
            <Down size={5} fill="#505050" />
          </Scrollbar>
        </Viewport>
        <Bottom full lines={[['High UV'], ['Now']]} time={['2:45 PM', '2/20/25']} />
      </Shot>
    </ThemeProvider>
  );
}

export default function App() {
  return (
    <>
      <Global />
      <Page>
        <CreateVpc />
        <CreateSubnetTop />
        <CreateSubnetEnd />
      </Page>
    </>
  );
}
